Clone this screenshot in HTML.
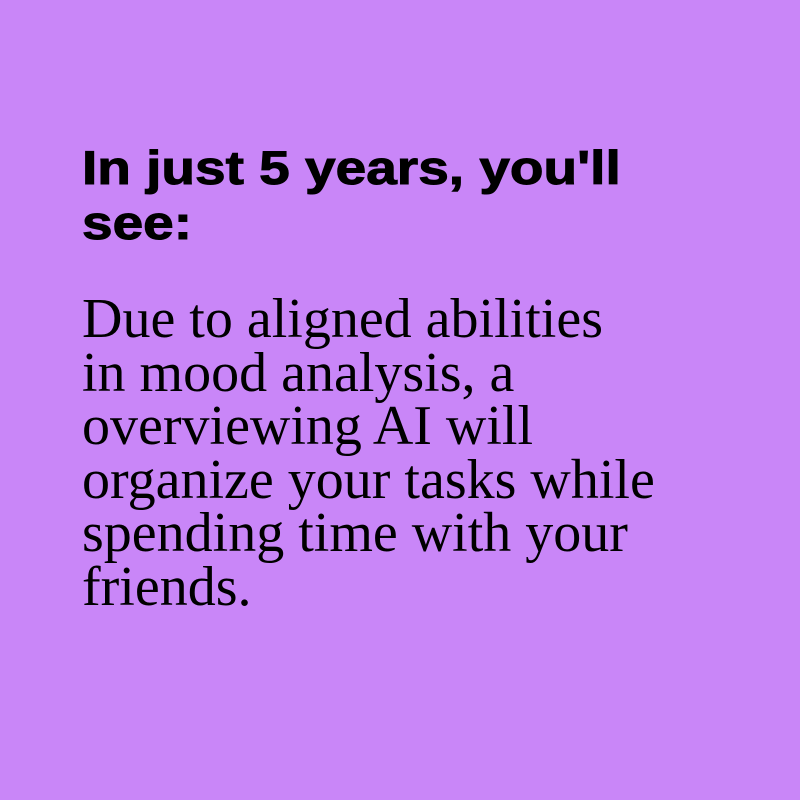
<!DOCTYPE html>
<html><head><style>
html,body{margin:0;padding:0;width:800px;height:800px;background:#c986f8;overflow:hidden}
h1{position:absolute;left:82px;top:140px;margin:0;font-family:"Liberation Sans",sans-serif;font-weight:bold;font-size:47px;line-height:55px;color:#000;width:700px;white-space:nowrap;transform:scaleX(1.17);transform-origin:left top;-webkit-text-stroke:1px #000}
p{position:absolute;left:82px;top:293px;margin:0;font-family:"Liberation Serif",serif;font-size:56px;line-height:53.5px;color:#000;width:700px;white-space:nowrap}
</style></head><body>
<h1>In just 5 years, you'll<br>see:</h1>
<p>Due to aligned abilities<br>in mood analysis, a<br>overviewing AI will<br>organize your tasks while<br>spending time with your<br>friends.</p>
</body></html>
